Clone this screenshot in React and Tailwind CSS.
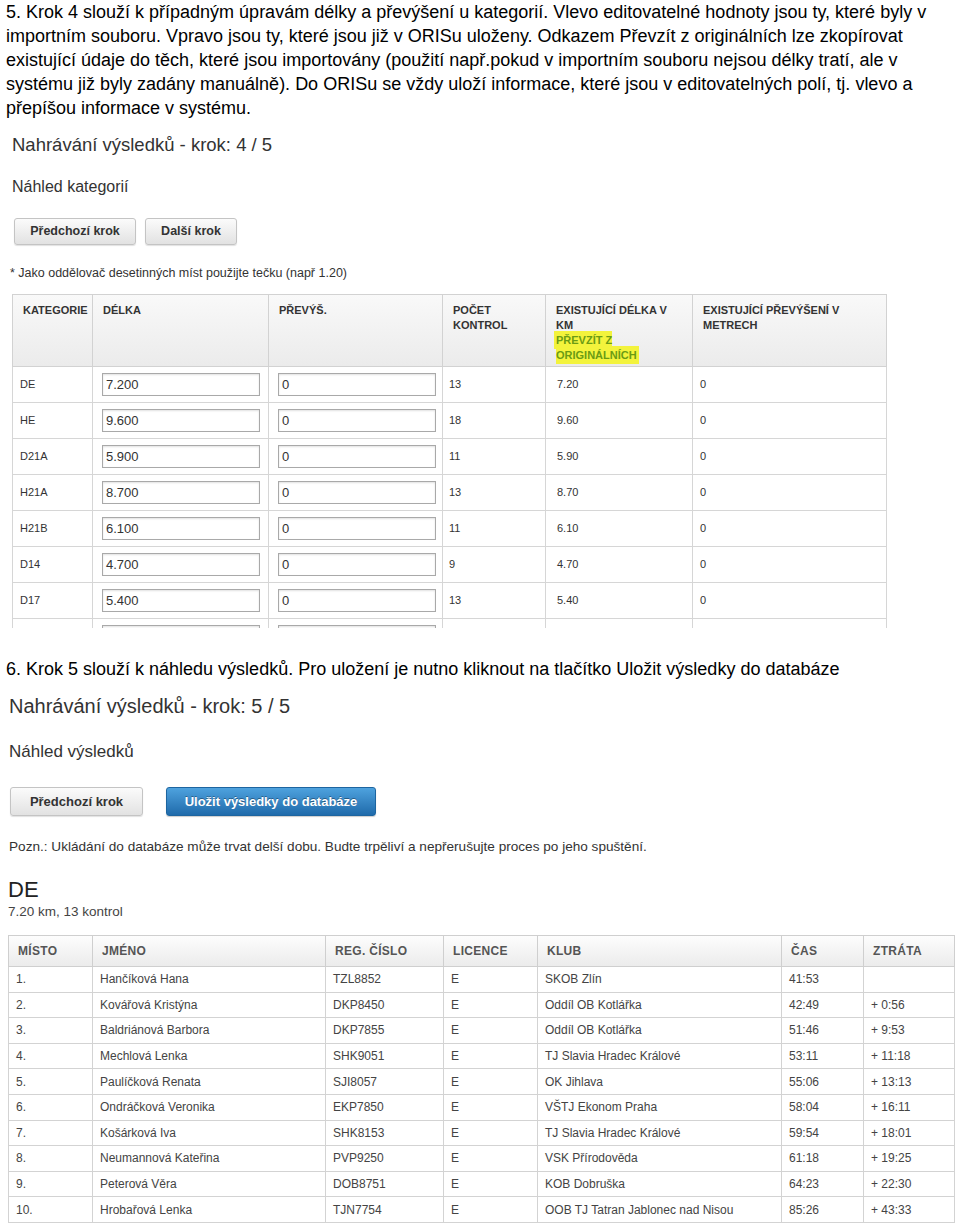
const font = { fontFamily: '"Liberation Sans", Arial, sans-serif' };

const categories = [
  ['DE', '7.200', '13', '7.20'],
  ['HE', '9.600', '18', '9.60'],
  ['D21A', '5.900', '11', '5.90'],
  ['H21A', '8.700', '13', '8.70'],
  ['H21B', '6.100', '11', '6.10'],
  ['D14', '4.700', '9', '4.70'],
  ['D17', '5.400', '13', '5.40'],
  ['', '', '', ''],
];

const results = [
  ['1.', 'Hančíková Hana', 'TZL8852', 'E', 'SKOB Zlín', '41:53', ''],
  ['2.', 'Kovářová Kristýna', 'DKP8450', 'E', 'Oddíl OB Kotlářka', '42:49', '+ 0:56'],
  ['3.', 'Baldriánová Barbora', 'DKP7855', 'E', 'Oddíl OB Kotlářka', '51:46', '+ 9:53'],
  ['4.', 'Mechlová Lenka', 'SHK9051', 'E', 'TJ Slavia Hradec Králové', '53:11', '+ 11:18'],
  ['5.', 'Paulíčková Renata', 'SJI8057', 'E', 'OK Jihlava', '55:06', '+ 13:13'],
  ['6.', 'Ondráčková Veronika', 'EKP7850', 'E', 'VŠTJ Ekonom Praha', '58:04', '+ 16:11'],
  ['7.', 'Košárková Iva', 'SHK8153', 'E', 'TJ Slavia Hradec Králové', '59:54', '+ 18:01'],
  ['8.', 'Neumannová Kateřina', 'PVP9250', 'E', 'VSK Přírodověda', '61:18', '+ 19:25'],
  ['9.', 'Peterová Věra', 'DOB8751', 'E', 'KOB Dobruška', '64:23', '+ 22:30'],
  ['10.', 'Hrobařová Lenka', 'TJN7754', 'E', 'OOB TJ Tatran Jablonec nad Nisou', '85:26', '+ 43:33'],
];

const GrayButton = ({ children, className }) => (
  <div
    className={`flex items-center justify-center rounded-[3px] border border-[#c4c4c4] bg-gradient-to-b from-[#fbfbfb] to-[#e2e2e2] font-bold text-[#333] shadow-[0_1px_1px_rgba(0,0,0,0.12)] ${className}`}
  >
    {children}
  </div>
);

const Input = ({ value }) => (
  <div className="ml-[9px] flex h-[23px] w-[158px] items-center border border-[#a9a9a9] bg-white pl-[3px] text-[13px] text-[#333] shadow-[inset_0_1px_2px_rgba(0,0,0,0.12)]">
    {value}
  </div>
);

const App = () => {
  return (
    <div className="w-[960px] bg-white text-black" style={font}>
      <p className="pl-[6px] text-[18px] leading-[24px]">
        5. Krok 4 slouží k případným úpravám délky a převýšení u kategorií. Vlevo editovatelné hodnoty jsou ty, které byly v<br />
        importním souboru. Vpravo jsou ty, které jsou již v ORISu uloženy. Odkazem Převzít z originálních lze zkopírovat<br />
        existující údaje do těch, které jsou importovány (použití např.pokud v importním souboru nejsou délky tratí, ale v<br />
        systému již byly zadány manuálně). Do ORISu se vždy uloží informace, které jsou v editovatelných polí, tj. vlevo a<br />
        přepíšou informace v systému.
      </p>

      {/* krok 4 */}
      <div className="pt-[13px]">
        <div className="pl-[12px] text-[18.5px] leading-[24px] text-[#333]">Nahrávání výsledků - krok: 4 / 5</div>
        <div className="mt-[18px] pl-[12px] text-[16px] leading-[24px] text-[#333]">Náhled kategorií</div>
        <div className="mt-[19px] flex gap-[9px] pl-[14px]">
          <GrayButton className="h-[27px] w-[122px] text-[12.5px]">Předchozí krok</GrayButton>
          <GrayButton className="h-[27px] w-[92px] text-[12.5px]">Další krok</GrayButton>
        </div>
        <div className="mt-[20px] pl-[10px] text-[12.5px] leading-[16px] text-[#333]">
          * Jako oddělovač desetinných míst použijte tečku (např 1.20)
        </div>
        <div className="mt-[13px] h-[334px] overflow-hidden pl-[12px]">
          <table className="w-[874px] table-fixed border-collapse text-[11px] text-[#333]">
            <colgroup>
              <col className="w-[80px]" />
              <col className="w-[176px]" />
              <col className="w-[174px]" />
              <col className="w-[103px]" />
              <col className="w-[147px]" />
              <col className="w-[194px]" />
            </colgroup>
            <thead>
              <tr className="h-[72px] bg-gradient-to-b from-[#f9f9f9] to-[#ebebeb] text-left align-top text-[11px] font-bold leading-[15px] text-[#333]">
                <th className="border border-[#d2d2d2] px-[10px] pt-[8px]">KATEGORIE</th>
                <th className="border border-[#d2d2d2] px-[10px] pt-[8px]">DÉLKA</th>
                <th className="border border-[#d2d2d2] px-[10px] pt-[8px]">PŘEVÝŠ.</th>
                <th className="border border-[#d2d2d2] px-[10px] pt-[8px]">POČET KONTROL</th>
                <th className="border border-[#d2d2d2] px-[10px] pt-[8px]">
                  EXISTUJÍCÍ DÉLKA V KM
                  <br />
                  <span className="bg-[#f3f33c] py-[1px] text-[#6b9b14] shadow-[0_0_0_2px_#f3f33c]">
                    PŘEVZÍT Z<br />
                    ORIGINÁLNÍCH
                  </span>
                </th>
                <th className="border border-[#d2d2d2] px-[10px] pt-[8px]">EXISTUJÍCÍ PŘEVÝŠENÍ V METRECH</th>
              </tr>
            </thead>
            <tbody>
              {categories.map((row, i) => (
                <tr key={i} className="h-[36px] align-middle">
                  <td className="border border-[#d6d6d6] pl-[7px]">{row[0]}</td>
                  <td className="border border-[#d6d6d6]">
                    <Input value={row[1]} />
                  </td>
                  <td className="border border-[#d6d6d6]">
                    <Input value={i < 7 ? '0' : ''} />
                  </td>
                  <td className="border border-[#d6d6d6] pl-[6px]">{row[2]}</td>
                  <td className="border border-[#d6d6d6] pl-[11px]">{row[3]}</td>
                  <td className="border border-[#d6d6d6] pl-[7px]">{i < 7 ? '0' : ''}</td>
                </tr>
              ))}
            </tbody>
          </table>
        </div>
      </div>

      <p className="mt-[29px] pl-[6px] text-[18px] leading-[24px]">
        6. Krok 5 slouží k náhledu výsledků. Pro uložení je nutno kliknout na tlačítko Uložit výsledky do databáze
      </p>

      {/* krok 5 */}
      <div>
        <div className="mt-[12px] pl-[9px] text-[20px] leading-[26px] text-[#333]">Nahrávání výsledků - krok: 5 / 5</div>
        <div className="mt-[21px] pl-[9px] text-[17px] leading-[24px] text-[#333]">Náhled výsledků</div>
        <div className="mt-[23px] flex gap-[23px] pl-[10px]">
          <GrayButton className="h-[29px] w-[133px] text-[13px]">Předchozí krok</GrayButton>
          <div className="flex h-[29px] w-[210px] items-center justify-center rounded-[3px] border border-[#1d65a0] bg-gradient-to-b from-[#4ea2de] to-[#1f6bab] text-[13px] font-bold text-white shadow-[0_1px_1px_rgba(0,0,0,0.2)] [text-shadow:0_-1px_0_rgba(0,0,0,0.35)]">
            Uložit výsledky do databáze
          </div>
        </div>
        <div className="mt-[22px] pl-[9px] text-[13.6px] leading-[18px] text-[#333]">
          Pozn.: Ukládání do databáze může trvat delší dobu. Budte trpěliví a nepřerušujte proces po jeho spuštění.
        </div>
        <div className="mt-[21px] pl-[8px] text-[22px] leading-[26px] text-[#222]">DE</div>
        <div className="pl-[8px] text-[13.5px] leading-[18px] text-[#444]">7.20 km, 13 kontrol</div>
        <div className="mt-[14px] pl-[8px]">
          <table className="w-[946px] table-fixed border-collapse text-[12px] text-[#444]">
            <colgroup>
              <col className="w-[84px]" />
              <col className="w-[233px]" />
              <col className="w-[118px]" />
              <col className="w-[94px]" />
              <col className="w-[244px]" />
              <col className="w-[82px]" />
              <col className="w-[91px]" />
            </colgroup>
            <thead>
              <tr className="h-[31px] bg-gradient-to-b from-[#fdfdfd] to-[#ebebeb] text-left text-[12px] font-bold tracking-[0.3px] text-[#555]">
                {['MÍSTO', 'JMÉNO', 'REG. ČÍSLO', 'LICENCE', 'KLUB', 'ČAS', 'ZTRÁTA'].map((h) => (
                  <th key={h} className="border border-[#cfcfcf] pl-[9px]">{h}</th>
                ))}
              </tr>
            </thead>
            <tbody>
              {results.map((r) => (
                <tr key={r[0]} className="h-[25.6px]">
                  {r.map((c, j) => (
                    <td key={j} className="border border-[#d3d3d3] pl-[7px]">{c}</td>
                  ))}
                </tr>
              ))}
            </tbody>
          </table>
        </div>
      </div>
    </div>
  );
};

export default App;
